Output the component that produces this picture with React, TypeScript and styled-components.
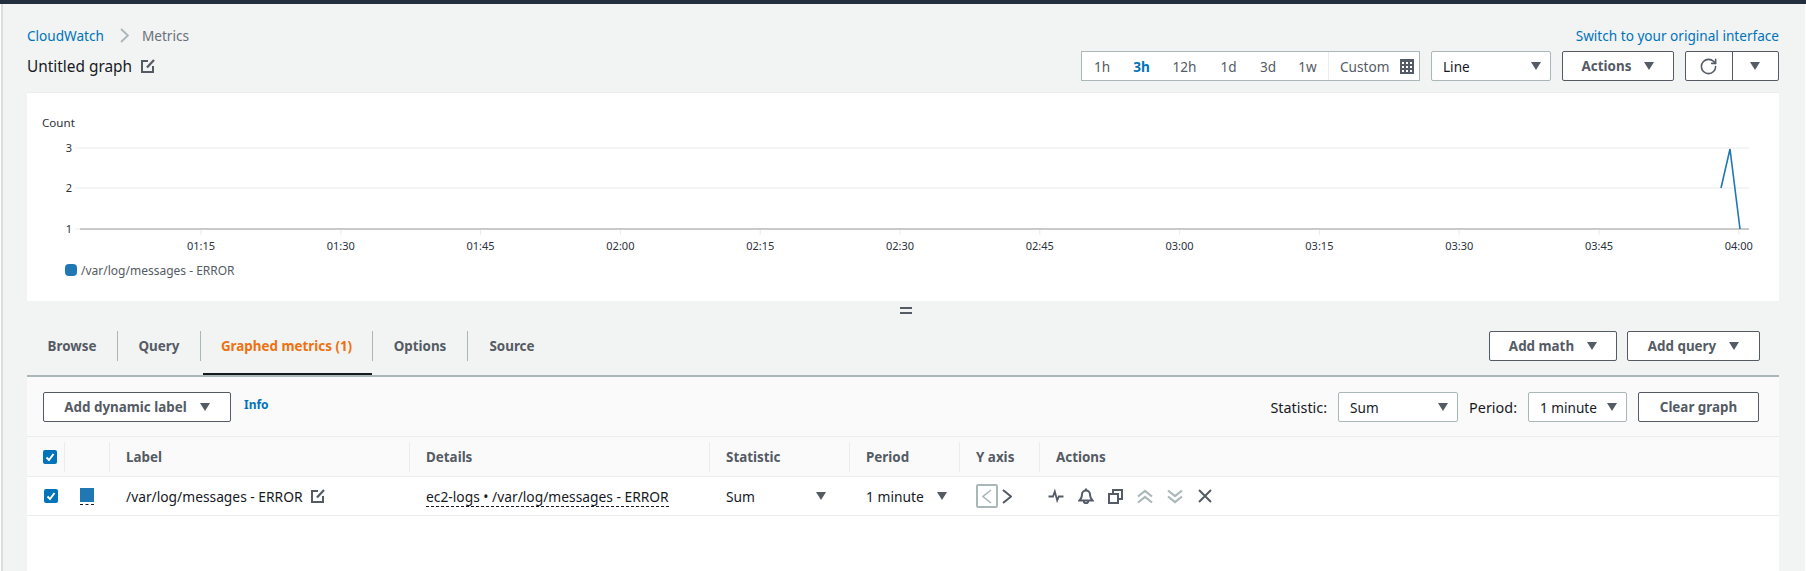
import React from 'react';
import styled, { createGlobalStyle } from 'styled-components';
import { RotateCw } from 'lucide-react';

const GlobalStyle = createGlobalStyle`
  html, body { margin: 0; padding: 0; background: #fff; }
  body { font-family: "Noto Sans", Roboto, "Liberation Sans", sans-serif; color: #16191f; font-size: 13.6px; }
`;

// --- Styled Components ---
const Page = styled.div`
  width: 1806px;
  height: 571px;
  overflow: hidden;
  box-sizing: border-box;
  display: flex;
  flex-direction: column;
`;
const TopBar = styled.div`
  height: 4px;
  flex: none;
  background: #232f3e;
`;
const Shell = styled.div`
  flex: 1;
  background: #f2f3f3;
  border-left: 2px solid #dcdcdc;
  margin: 0 1px;
  padding: 0 26px 0 24px;
`;
const CrumbRow = styled.div`
  height: 47px;
  padding-top: 15px;
  box-sizing: border-box;
  display: flex;
  align-items: center;
  justify-content: space-between;
`;
const Crumbs = styled.div`
  display: flex;
  align-items: center;
`;
const Link = styled.a`
  color: #0073bb;
  font-size: 13.6px;
`;
const CrumbCurrent = styled.span`
  color: #687078;
  font-size: 13.6px;
`;
const CrumbSep = styled.svg`
  margin: 0 13px 0 16px;
`;
const HeaderRow = styled.div`
  height: 41px;
  display: flex;
  align-items: flex-start;
  justify-content: space-between;
`;
const GraphTitle = styled.div`
  display: flex;
  align-items: center;
  gap: 9px;
  font-size: 15.4px;
  height: 30px;
`;
const Controls = styled.div`
  display: flex;
  gap: 11px;
`;
const TimeBar = styled.div`
  width: 339px;
  height: 30px;
  box-sizing: border-box;
  display: flex;
  align-items: center;
  background: #fff;
  border: 1px solid #aab7b8;
  color: #545b64;
`;
const TimeItem = styled.span<{ $active?: boolean; $w: number }>`
  width: ${p => p.$w}px;
  text-align: center;
  font-weight: ${p => (p.$active ? 700 : 400)};
  color: ${p => (p.$active ? '#0073bb' : '#545b64')};
`;
const CustomRange = styled.span`
  flex: 1;
  height: 100%;
  display: flex;
  align-items: center;
  gap: 11px;
  padding-left: 11px;
  border-left: 1px solid #eaeded;
`;
const Select = styled.div<{ $w: number }>`
  width: ${p => p.$w}px;
  height: 30px;
  box-sizing: border-box;
  display: flex;
  align-items: center;
  justify-content: space-between;
  padding: 0 9px 0 11px;
  background: #fff;
  border: 1px solid #aab7b8;
  border-radius: 2px;
`;
const Caret = styled.span`
  display: inline-block;
  flex: none;
  width: 0;
  height: 0;
  border-left: 5.5px solid transparent;
  border-right: 5.5px solid transparent;
  border-top: 8px solid #545b64;
`;
const Button = styled.button<{ $w: number; $ml?: number }>`
  width: ${p => p.$w}px;
  height: 30px;
  margin-left: ${p => p.$ml ?? 0}px;
  box-sizing: border-box;
  display: inline-flex;
  align-items: center;
  justify-content: center;
  gap: 13px;
  padding: 0;
  background: #fff;
  border: 1px solid #545b64;
  border-radius: 2px;
  color: #545b64;
  font-family: inherit;
  font-size: 13.4px;
  font-weight: 700;
`;
const SplitButton = styled.div`
  width: 94px;
  height: 30px;
  box-sizing: border-box;
  display: flex;
  background: #fff;
  border: 1px solid #545b64;
  border-radius: 2px;
  color: #545b64;
`;
const SplitPart = styled.span<{ $divider?: boolean }>`
  flex: 1;
  display: flex;
  align-items: center;
  justify-content: center;
  border-left: ${p => (p.$divider ? '1px solid #545b64' : 'none')};
`;
const ChartPanel = styled.div`
  height: 209px;
  width: 1752px;
  box-sizing: border-box;
  background: #fff;
  border-top: 1px solid #eaeded;
`;
const ChartSvg = styled.svg`
  display: block;
  font-family: "Noto Sans", Roboto, sans-serif;
  font-size: 11px;
  fill: #2b323b;
`;
const Resizer = styled.div`
  height: 30px;
  box-sizing: border-box;
  padding: 6px 0 0 6px;
  display: flex;
  justify-content: center;
`;
const ResizeGrip = styled.span`
  display: block;
  width: 12px;
  height: 3px;
  border-top: 2px solid #545b64;
  border-bottom: 2px solid #545b64;
`;
const TabBar = styled.div`
  width: 1752px;
  height: 46px;
  box-sizing: border-box;
  display: flex;
  align-items: flex-start;
  justify-content: space-between;
  border-bottom: 2px solid #aab7b8;
`;
const Tabs = styled.div`
  display: flex;
  height: 44px;
`;
const Tab = styled.div<{ $w: number; $active?: boolean; $last?: boolean }>`
  position: relative;
  width: ${p => p.$w}px;
  height: 30px;
  box-sizing: border-box;
  padding-bottom: 1px;
  display: flex;
  align-items: center;
  justify-content: center;
  font-weight: 700;
  font-size: 13.4px;
  color: ${p => (p.$active ? '#ec7211' : '#545b64')};
  border-right: ${p => (p.$last ? 'none' : '1px solid #aab7b8')};
  &::after {
    content: '';
    display: ${p => (p.$active ? 'block' : 'none')};
    position: absolute;
    left: 2px;
    right: 0;
    top: 42px;
    height: 2px;
    background: #16191f;
  }
`;
const TabActions = styled.div`
  display: flex;
  gap: 10px;
  padding-right: 19px;
`;
const Body = styled.div`
  width: 1752px;
  height: 195px;
  background: #fff;
`;
const Toolbar = styled.div`
  height: 60px;
  box-sizing: border-box;
  padding: 15px 20px 0 16px;
  background: #fafafa;
  border-bottom: 1px solid #eaeded;
  display: flex;
  align-items: flex-start;
  justify-content: space-between;
`;
const ToolGroup = styled.div`
  display: flex;
  align-items: center;
`;
const InfoLink = styled.a`
  color: #0073bb;
  font-size: 12px;
  font-weight: 700;
  margin: -5px 0 0 13px;
`;
const ToolLabel = styled.span`
  font-size: 14.4px;
  color: #16191f;
  margin: 0 11px;
`;
const TableHead = styled.div`
  height: 40px;
  box-sizing: border-box;
  background: #fafafa;
  border-bottom: 1px solid #eaeded;
  display: grid;
  grid-template-columns: 37px 45px 300px 300px 140px 110px 80px 1fr;
  align-items: center;
`;
const HeadCell = styled.div`
  height: 30px;
  box-sizing: border-box;
  display: flex;
  align-items: center;
  padding-left: 16px;
  font-weight: 700;
  font-size: 13.4px;
  color: #545b64;
  border-left: 1px solid #eaeded;
`;
const Row = styled.div`
  height: 39px;
  box-sizing: border-box;
  border-bottom: 1px solid #eaeded;
  display: grid;
  grid-template-columns: 37px 45px 300px 300px 140px 110px 80px 1fr;
  align-items: center;
`;
const RowCell = styled.div`
  display: flex;
  align-items: center;
  gap: 8px;
  padding-left: 17px;
  font-size: 13.8px;
  color: #16191f;
`;
const CheckCell = styled.div<{ $pad: number }>`
  padding-left: ${p => p.$pad}px;
  display: flex;
`;
const Checkbox = styled.span`
  width: 14px;
  height: 14px;
  border-radius: 2px;
  background: #0073bb;
  display: flex;
  align-items: center;
  justify-content: center;
`;
const SwatchCell = styled.div`
  padding-left: 16px;
`;
const Swatch = styled.div`
  width: 14px;
  height: 14px;
  background: #1f77b4;
  margin-bottom: 2px;
`;
const SwatchDash = styled.div`
  width: 14px;
  border-bottom: 1px dashed #16191f;
`;
const Dashed = styled.span`
  position: relative;
  &::after {
    content: '';
    position: absolute;
    left: 0;
    right: 0;
    bottom: -1px;
    border-bottom: 1px dashed #16191f;
  }
`;
const CellSelect = styled.div<{ $w: number }>`
  width: ${p => p.$w}px;
  display: flex;
  align-items: center;
  justify-content: space-between;
`;
const AxisBox = styled.span`
  width: 22px;
  height: 24px;
  box-sizing: border-box;
  border: 2px solid #aab7b8;
  border-radius: 2px;
  display: flex;
  align-items: center;
  justify-content: center;
`;
const AxisRight = styled.span`
  display: flex;
  margin-left: -4px;
`;
const RowActions = styled.div`
  display: flex;
  align-items: center;
  gap: 14px;
  padding-left: 9px;
`;

const EditIcon = () => (
  <svg width="14" height="14" viewBox="0 0 14 14" fill="none" stroke="#545b64" strokeWidth="2">
    <path d="M7 2H1v11h11V7" />
    <path d="M13 1L6 8.5" strokeWidth="2.2" />
  </svg>
);
const CalendarIcon = () => (
  <svg width="14" height="15" viewBox="0 0 14 15">
    <rect width="14" height="15" fill="#545b64" />
    <path d="M2 3h2v2H2zM6 3h2v2H6zM10 3h2v2h-2zM2 7h2v2H2zM6 7h2v2H6zM10 7h2v2h-2zM2 11h2v2H2zM6 11h2v2H6zM10 11h2v2h-2z" fill="#fff" />
  </svg>
);
const CheckMark = () => (
  <svg width="10" height="10" viewBox="0 0 10 10" fill="none" stroke="#fff" strokeWidth="2">
    <path d="M1.5 5.5L4 8l4.5-6" />
  </svg>
);
const PulseIcon = () => (
  <svg width="16" height="16" viewBox="0 0 16 16" fill="none" stroke="#545b64" strokeWidth="1.8">
    <path d="M0.5 8.5h4.5L6.8 3.5l2.4 9 1.6-4h4.7" />
  </svg>
);
const BellIcon = () => (
  <svg width="16" height="16" viewBox="0 0 16 16" fill="none" stroke="#545b64" strokeWidth="2">
    <path d="M1.5 12.5c1.6-1.4 2.5-2.8 2.5-6a4 4 0 0 1 8 0c0 3.200.9 4.600 2.500 6z" />
    <path d="M8 0.500v2M5.800 13a2.200 2.200 0 0 0 4.400 0" />
  </svg>
);
const CopyIcon = () => (
  <svg width="15" height="15" viewBox="0 0 15 15" fill="none" stroke="#545b64" strokeWidth="2">
    <path d="M1 5h9v9H1z" />
    <path d="M5 5V1h9v9h-4" />
  </svg>
);
const DoubleChevronIcon = ({ down }: { down?: boolean }) => (
  <svg width="16" height="15" viewBox="0 0 16 15" fill="none" stroke="#aab7b8" strokeWidth="2.2">
    <path d={down ? 'M1 1.500l7 5.500 7-5.500M1 7.500l7 5.500 7-5.500' : 'M1 7.500l7-5.500 7 5.500M1 13.500l7-5.500 7 5.500'} />
  </svg>
);
const CloseIcon = () => (
  <svg width="16" height="16" viewBox="0 0 16 16" fill="none" stroke="#545b64" strokeWidth="2">
    <path d="M2 2l12 12M14 2L2 14" />
  </svg>
);
const ChevronGlyph = ({ left, color, w = 10, h = 15, sw = 1.6 }: { left?: boolean; color: string; w?: number; h?: number; sw?: number }) => (
  <svg width={w} height={h} viewBox={`0 0 ${w} ${h}`} fill="none" stroke={color} strokeWidth={sw}>
    <path d={left ? `M${w - 1} 1L1 ${h / 2}L${w - 1} ${h - 1}` : `M1 1L${w - 1} ${h / 2}L1 ${h - 1}`} />
  </svg>
);

const ticks = ['01:15', '01:30', '01:45', '02:00', '02:15', '02:30', '02:45', '03:00', '03:15', '03:30', '03:45', '04:00'];

const Chart = () => (
  <ChartSvg width="1752" height="208" viewBox="27 93 1752 208">
    <text x="42" y="127" fontSize="11.6">Count</text>
    {[148, 188].map(y => <line key={y} x1="80" x2="1749" y1={y} y2={y} stroke="#eaeaea" />)}
    {[148, 188, 229].map((y, i) => (
      <g key={y}>
        <line x1="75" x2="80" y1={y} y2={y} stroke="#eaeaea" />
        <text x="69" y={y + 4} textAnchor="middle">{3 - i}</text>
      </g>
    ))}
    <line x1="80" x2="1749" y1="229" y2="229" stroke="#c9c9c9" strokeWidth="2" />
    {ticks.map((t, i) => {
      const x = 201 + i * 139.8;
      return (
        <g key={t}>
          <line x1={x} x2={x} y1="230" y2="235" stroke="#eaeaea" />
          <text x={x} y="250" textAnchor="middle">{t}</text>
        </g>
      );
    })}
    <polyline points="1721,188 1730,149 1740,229" fill="none" stroke="#1f77b4" strokeWidth="1.6" />
    <rect x="65" y="264" width="12" height="12" rx="4" fill="#1f77b4" />
    <text x="81" y="275" fontSize="12" fill="#545b64">/var/log/messages - ERROR</text>
  </ChartSvg>
);

export default function App() {
  return (
    <Page>
      <GlobalStyle />
      <TopBar />
      <Shell>
        <CrumbRow>
          <Crumbs>
            <Link>CloudWatch</Link>
            <CrumbSep width="9" height="15" viewBox="0 0 9 15" fill="none" stroke="#aab7b8" strokeWidth="1.8">
              <path d="M1 1l7 6.500-7 6.500" />
            </CrumbSep>
            <CrumbCurrent>Metrics</CrumbCurrent>
          </Crumbs>
          <Link>Switch to your original interface</Link>
        </CrumbRow>
        <HeaderRow>
          <GraphTitle>Untitled graph <EditIcon /></GraphTitle>
          <Controls>
            <TimeBar>
              <TimeItem $w={40}>1h</TimeItem>
              <TimeItem $w={39} $active>3h</TimeItem>
              <TimeItem $w={47}>12h</TimeItem>
              <TimeItem $w={41}>1d</TimeItem>
              <TimeItem $w={38}>3d</TimeItem>
              <TimeItem $w={41}>1w</TimeItem>
              <CustomRange>Custom <CalendarIcon /></CustomRange>
            </TimeBar>
            <Select $w={120}>Line <Caret /></Select>
            <Button $w={112}>Actions <Caret /></Button>
            <SplitButton>
              <SplitPart><RotateCw size={19} strokeWidth={2} /></SplitPart>
              <SplitPart $divider><Caret /></SplitPart>
            </SplitButton>
          </Controls>
        </HeaderRow>
        <ChartPanel><Chart /></ChartPanel>
        <Resizer><ResizeGrip /></Resizer>
        <TabBar>
          <Tabs>
            <Tab $w={91}>Browse</Tab>
            <Tab $w={83}>Query</Tab>
            <Tab $w={172} $active>Graphed metrics (1)</Tab>
            <Tab $w={95}>Options</Tab>
            <Tab $w={88} $last>Source</Tab>
          </Tabs>
          <TabActions>
            <Button $w={128}>Add math <Caret /></Button>
            <Button $w={133}>Add query <Caret /></Button>
          </TabActions>
        </TabBar>
        <Body>
          <Toolbar>
            <ToolGroup>
              <Button $w={188}>Add dynamic label <Caret /></Button>
              <InfoLink>Info</InfoLink>
            </ToolGroup>
            <ToolGroup>
              <ToolLabel>Statistic:</ToolLabel>
              <Select $w={120}>Sum <Caret /></Select>
              <ToolLabel>Period:</ToolLabel>
              <Select $w={99}>1 minute <Caret /></Select>
              <Button $w={121} $ml={11}>Clear graph</Button>
            </ToolGroup>
          </Toolbar>
          <TableHead>
            <CheckCell $pad={16}><Checkbox><CheckMark /></Checkbox></CheckCell>
            <HeadCell />
            <HeadCell>Label</HeadCell>
            <HeadCell>Details</HeadCell>
            <HeadCell>Statistic</HeadCell>
            <HeadCell>Period</HeadCell>
            <HeadCell>Y axis</HeadCell>
            <HeadCell>Actions</HeadCell>
          </TableHead>
          <Row>
            <CheckCell $pad={17}><Checkbox><CheckMark /></Checkbox></CheckCell>
            <SwatchCell><Swatch /><SwatchDash /></SwatchCell>
            <RowCell>/var/log/messages - ERROR <EditIcon /></RowCell>
            <RowCell><Dashed>ec2-logs • /var/log/messages - ERROR</Dashed></RowCell>
            <RowCell><CellSelect $w={100}>Sum <Caret /></CellSelect></RowCell>
            <RowCell><CellSelect $w={81}>1 minute <Caret /></CellSelect></RowCell>
            <RowCell>
              <AxisBox><ChevronGlyph left color="#aab7b8" /></AxisBox>
              <AxisRight><ChevronGlyph color="#545b64" sw={2} /></AxisRight>
            </RowCell>
            <RowActions>
              <PulseIcon />
              <BellIcon />
              <CopyIcon />
              <DoubleChevronIcon />
              <DoubleChevronIcon down />
              <CloseIcon />
            </RowActions>
          </Row>
        </Body>
      </Shell>
    </Page>
  );
}
